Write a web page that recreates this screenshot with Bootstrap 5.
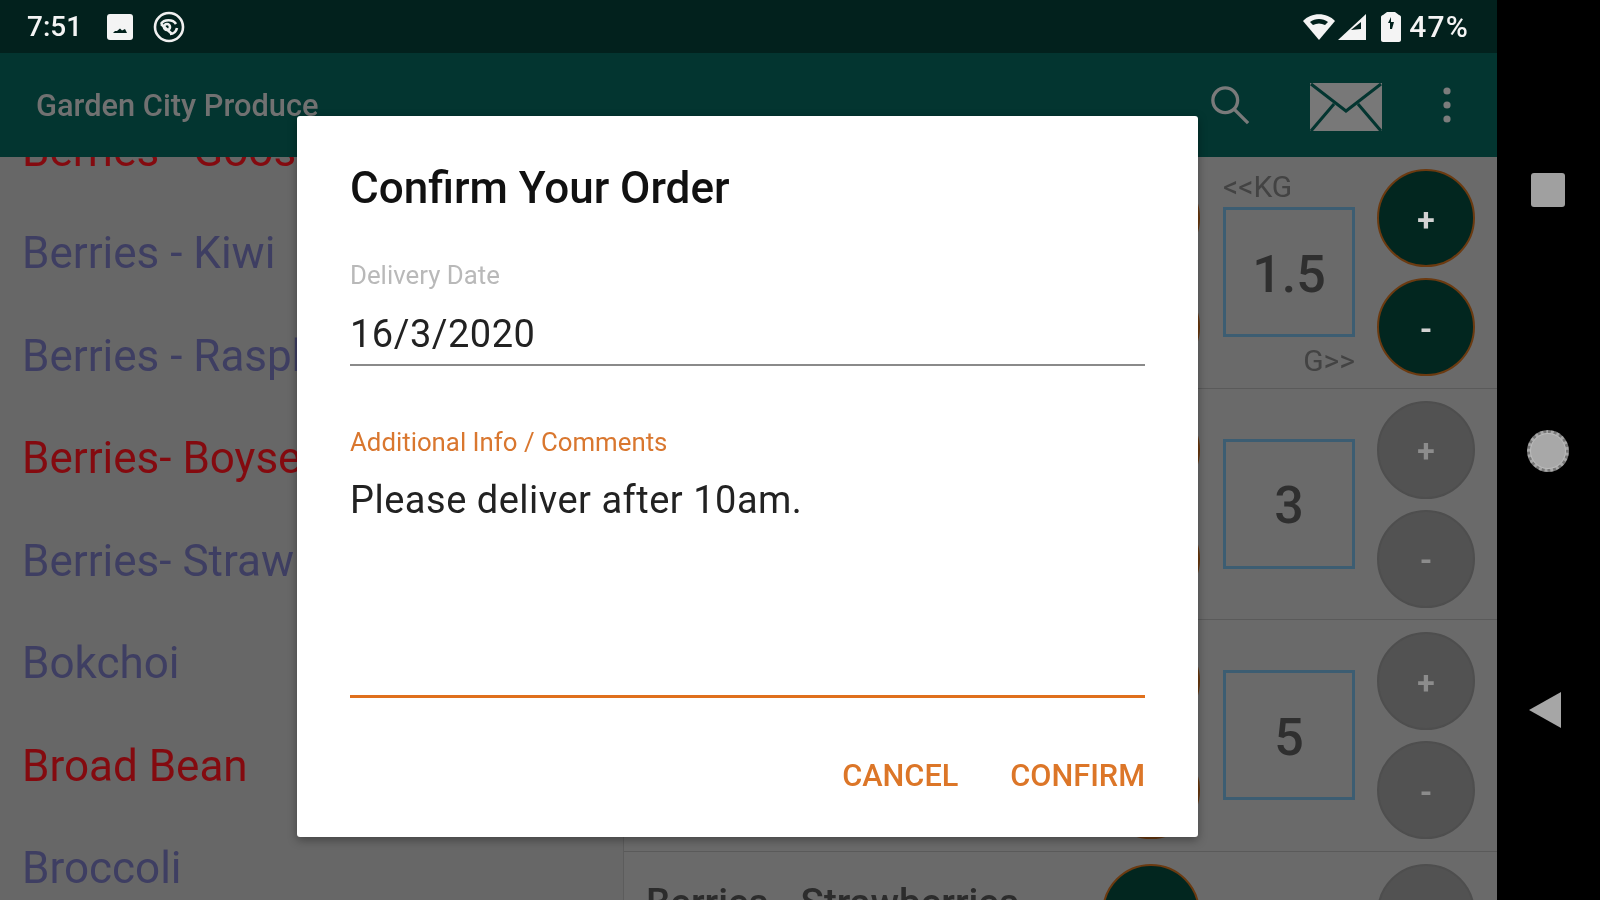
<!DOCTYPE html>
<html lang="en">

<head>
    <meta charset="UTF-8">
    <meta name="viewport" content="width=device-width, initial-scale=1.0">
    <title>Garden City Produce</title>
    <link href="https://cdn.jsdelivr.net/npm/bootstrap@5.3.2/dist/css/bootstrap.min.css" rel="stylesheet">
    <style>
        html, body { height: 100%; }
        body { font-family: Roboto, "Liberation Sans", sans-serif; background: #000; overflow: hidden; }

        .app-frame { width: 1600px; height: 900px; position: relative; filter: blur(.6px); }
        .app-screen { width: 1497px; background: #686868; }
        .nav-rail { width: 103px; background: #000; padding-right: 2px; }

        .status-bar { height: 53px; background: #02211d; color: #f4f4f4; padding: 0 28px 0 27px; font-size: 28px; font-weight: 500; }
        .saver-ico { margin-left: 19px; }
        .signal-ico { margin-left: 1px; }
        .batt-ico { margin-left: 14px; }
        .batt-pct { font-size: 30px; letter-spacing: 1.2px; }
        .app-toolbar { height: 104px; background: #033530; padding: 0 0 0 36px; z-index: 2; }
        .app-title { color: #717171; font-size: 30.8px; font-weight: 500; padding-top: 2px; }
        .search-ico { margin-left: 892px; }
        .mail-ico { margin-left: 60px; margin-top: 4px; }
        .more-ico { margin-left: 60px; }

        .content-area { height: 743px; overflow: hidden; }
        .produce-list { width: 623px; margin-top: -57.5px; padding-left: 22px; flex: none; background: #676767; }
        .produce-item { height: 102.5px; line-height: 102.5px; font-size: 44px; color: #3e3e62; white-space: nowrap; }
        .produce-item.sold { color: #840a0f; }

        .order-rows { flex: 1; border-left: 1px solid #5c5c5c; }
        .order-row { height: 231.5px; border-bottom: 1px solid #5a5a5a; padding: 12px 22px 0 22px; background: #6a6a6a; }
        .order-name { flex: 1; font-size: 38.500px; font-weight: 500; color: #2c2c2c; padding-top: 10px; white-space: nowrap; }
        .qty-col { width: 132px; margin: 0 22px 0 23px; }
        .unit-lbl { height: 38px; font-size: 30px; color: #434343; line-height: 36px; }
        .unit-lbl.lower { line-height: 48px; text-align: right; }
        .qty-box { height: 130px; border: 3px solid #3c5d72; font-size: 52px; font-weight: 500; color: #2f2f2f; padding-top: 5px; }
        .step-col { width: 98px; gap: 11px; }
        .step-btn { width: 98px; height: 98px; border-radius: 50%; background: #525252; border: 2px solid #4e4e4e; color: #8c8c8c; font-size: 32px; font-weight: 700; padding-top: 3px; }
        .step-btn.on { background: #02261f; border-color: #6b3a10; color: #d2d2d2; }

        .order-dialog { left: 297px; top: 116px; width: 901px; height: 721px; background: #fff; border-radius: 3px; box-shadow: 0 3px 10px rgba(0,0,0,.35); padding: 0 53px; z-index: 5; color: #111; }
        .dialog-title { height: 100px; padding-top: 45px; font-size: 44px; font-weight: 500; line-height: 54px; margin: 0; }
        .field-lbl { font-size: 25.800px; line-height: 30px; color: #b9b9b9; }
        .field-lbl.focused { color: #d9772f; }
        .field-val { font-size: 38px; line-height: 50px; letter-spacing: .5px; color: #222; margin-top: 18px; }
        .date-val { margin-top: 19px; }
        .date-field { height: 104px; border-bottom: 2px solid #8a8a8a; margin-top: 44px; box-sizing: content-box; }
        .notes-field { height: 271px; border-bottom: 3px solid #e0701c; margin-top: 61px; }
        .dialog-actions { gap: 52px; margin-top: 61px; }
        .dlg-btn { background: none; border: 0; padding: 0; font-size: 30.700px; font-weight: 500; color: #dc7628; line-height: 34px; }

        .nav-square { width: 34px; height: 34px; background: #a0a0a0; border-radius: 3px; margin-top: 173px; }
        .nav-dot { width: 42px; height: 42px; background: #a8a8a8; border-radius: 50%; border: 3px dotted #777; outline: 1px solid #bbb; outline-offset: -4px; margin-top: 223px; }
        .nav-back { margin-top: 219px; margin-right: 6px; }
    </style>
</head>

<body>
    <div class="app-frame d-flex">
        <div class="app-screen d-flex flex-column">
            <!-- Status bar -->
            <div class="status-bar d-flex align-items-center">
                <span>7:51</span>
                <svg class="ms-4" width="28" height="28" viewBox="0 0 28 28">
                    <rect x="1" y="1" width="26" height="26" rx="3" fill="#f4f4f4"/>
                    <path d="M7 20h14l-2-4-3 1.500-2-2-3 2.500-2 0z" fill="#02211d"/>
                </svg>
                <svg class="saver-ico" width="32" height="32" viewBox="0 0 32 32" fill="none" stroke="#f0f0f0" stroke-width="2.600">
                    <circle cx="16" cy="16" r="14"/>
                    <path d="M8 13c3-5 12-5 15 0M8 13l11 10M24 17c-1 4-3 6-7 6"/>
                    <circle cx="14" cy="16" r="3"/>
                </svg>
                <div class="ms-auto d-flex align-items-center">
                    <svg width="34" height="28" viewBox="0 0 34 28">
                        <path d="M1 8C9-1 25-1 33 8L17 27z" fill="#f4f4f4"/>
                        <path d="M8 9c5-4 13-4 18 0l-3 3c-4-2-8-2-12 0z" fill="#02211d"/>
                    </svg>
                    <svg class="signal-ico" width="30" height="28" viewBox="0 0 30 28">
                        <path d="M1 27L29 1v26z" fill="#f4f4f4"/>
                        <path d="M14 17l10-1V9z" fill="#02211d"/>
                    </svg>
                    <svg class="batt-ico" width="20" height="30" viewBox="0 0 20 30">
                        <path d="M6 0h8l4 3c1 0 2 1 2 2v23c0 1-1 2-2 2H2c-1 0-2-1-2-2V5c0-1 1-2 2-2z" fill="#f4f4f4"/>
                        <path d="M10 5l-3 6h2v6h2l2-7h-3z" fill="#02211d"/>
                    </svg>
                    <span class="ms-2 batt-pct">47%</span>
                </div>
            </div>

            <!-- Toolbar -->
            <div class="app-toolbar d-flex align-items-center position-relative">
                <span class="app-title">Garden City Produce</span>
                <svg class="search-ico" width="40" height="40" viewBox="0 0 42 42" fill="none" stroke="#7a7a7a" stroke-width="3.500">
                    <circle cx="16" cy="16" r="13"/>
                    <path d="M25 25l15 15"/>
                </svg>
                <svg class="mail-ico" width="72" height="50" viewBox="0 0 72 50">
                    <rect x="0" y="1" width="72" height="48" fill="#787878"/>
                    <path d="M1 2l35 27L71 2M1 49l23-27M71 49L48 22" fill="none" stroke="#033530" stroke-width="3"/>
                </svg>
                <svg class="more-ico" width="10" height="38" viewBox="0 0 10 38" fill="#7c7c7c">
                    <circle cx="5" cy="5" r="3.600"/><circle cx="5" cy="19" r="3.600"/><circle cx="5" cy="33" r="3.600"/>
                </svg>
            </div>

            <!-- Content -->
            <div class="content-area d-flex">
                <div class="produce-list">
                    <div class="produce-item sold">Berries - Gooseberries</div>
                    <div class="produce-item">Berries - Kiwi</div>
                    <div class="produce-item">Berries - Raspberries</div>
                    <div class="produce-item sold">Berries- Boysenberries</div>
                    <div class="produce-item">Berries- Strawberries</div>
                    <div class="produce-item">Bokchoi</div>
                    <div class="produce-item sold">Broad Bean</div>
                    <div class="produce-item">Broccoli</div>
                </div>
                <div class="order-rows">
                    <div class="order-row d-flex">
                        <div class="order-name"></div>
                        <div class="step-col d-flex flex-column"><div class="step-btn on"></div><div class="step-btn on"></div></div>
                        <div class="qty-col">
                            <div class="unit-lbl">&lt;&lt;KG</div>
                            <div class="qty-box d-flex align-items-center justify-content-center">1.5</div>
                            <div class="unit-lbl lower">G&gt;&gt;</div>
                        </div>
                        <div class="step-col d-flex flex-column">
                            <div class="step-btn on d-flex align-items-center justify-content-center">+</div>
                            <div class="step-btn on d-flex align-items-center justify-content-center">-</div>
                        </div>
                    </div>
                    <div class="order-row d-flex">
                        <div class="order-name"></div>
                        <div class="step-col d-flex flex-column"><div class="step-btn on"></div><div class="step-btn on"></div></div>
                        <div class="qty-col">
                            <div class="unit-lbl"></div>
                            <div class="qty-box d-flex align-items-center justify-content-center">3</div>
                        </div>
                        <div class="step-col d-flex flex-column">
                            <div class="step-btn d-flex align-items-center justify-content-center">+</div>
                            <div class="step-btn d-flex align-items-center justify-content-center">-</div>
                        </div>
                    </div>
                    <div class="order-row d-flex">
                        <div class="order-name"></div>
                        <div class="step-col d-flex flex-column"><div class="step-btn on"></div><div class="step-btn on"></div></div>
                        <div class="qty-col">
                            <div class="unit-lbl"></div>
                            <div class="qty-box d-flex align-items-center justify-content-center">5</div>
                        </div>
                        <div class="step-col d-flex flex-column">
                            <div class="step-btn d-flex align-items-center justify-content-center">+</div>
                            <div class="step-btn d-flex align-items-center justify-content-center">-</div>
                        </div>
                    </div>
                    <div class="order-row d-flex">
                        <div class="order-name">Berries - Strawberries</div>
                        <div class="step-col d-flex flex-column"><div class="step-btn on"></div></div>
                        <div class="qty-col"></div>
                        <div class="step-col d-flex flex-column"><div class="step-btn"></div></div>
                    </div>
                </div>
            </div>
        </div>

        <!-- Android nav buttons -->
        <div class="nav-rail position-relative d-flex flex-column align-items-center">
            <div class="nav-square"></div>
            <div class="nav-dot"></div>
            <svg class="nav-back" width="34" height="38" viewBox="0 0 34 38"><path d="M1 19L33 1v36z" fill="#a6a6a6"/></svg>
        </div>

        <!-- Dialog -->
        <div class="order-dialog position-absolute">
            <h5 class="dialog-title">Confirm Your Order</h5>
            <div class="date-field">
                <div class="field-lbl">Delivery Date</div>
                <div class="field-val date-val">16/3/2020</div>
            </div>
            <div class="notes-field">
                <div class="field-lbl focused">Additional Info / Comments</div>
                <div class="field-val">Please deliver after 10am.</div>
            </div>
            <div class="dialog-actions d-flex justify-content-end">
                <button class="dlg-btn" type="button">CANCEL</button>
                <button class="dlg-btn" type="button">CONFIRM</button>
            </div>
        </div>
    </div>

    <script src="https://cdn.jsdelivr.net/npm/bootstrap@5.3.2/dist/js/bootstrap.bundle.min.js"></script>
</body>

</html>
